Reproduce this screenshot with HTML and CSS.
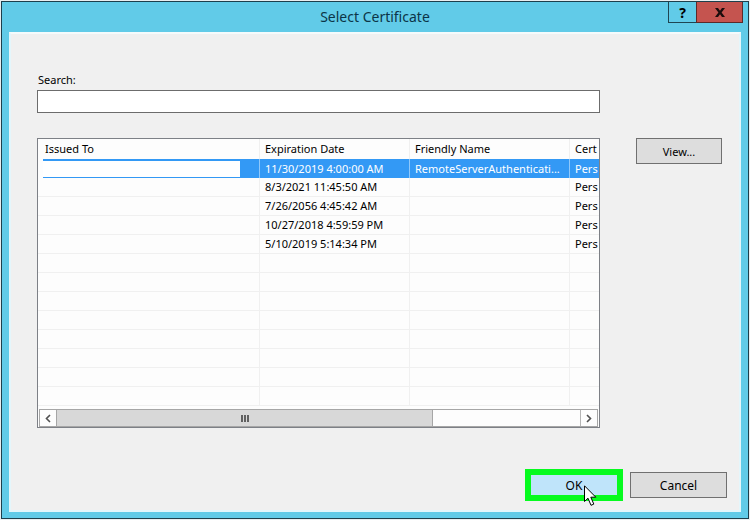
FILE: index.html
```html
<!DOCTYPE html>
<html lang="en">
<head>
  <meta charset="UTF-8" />
  <meta name="viewport" content="width=device-width, initial-scale=1.0" />
  <title>Select Certificate</title>
  <link rel="stylesheet" href="styles.css">
</head>
<body>
  <div class="dialog" role="dialog" aria-labelledby="dialogTitle">
    <div class="titlebar">
      <h1 id="dialogTitle">Select Certificate</h1>
      <div class="window-buttons">
        <button class="help" aria-label="Help">?</button>
        <button class="close" aria-label="Close">
          <svg width="10" height="9" viewBox="0 0 10 9"><path d="M0 0 H3 L5 2.7 L7 0 H10 L6.6 4.5 L10 9 H7 L5 6.3 L3 9 H0 L3.4 4.5 Z" fill="#1c0d0d" /></svg>
        </button>
      </div>
    </div>

    <div class="content">
      <div class="search">
        <label for="search">Search:</label>
        <input type="text" id="search">
      </div>

      <div class="main">
        <div class="list">
          <table>
            <colgroup>
              <col class="col-issued"><col class="col-date"><col class="col-name"><col>
            </colgroup>
            <thead>
              <tr><th>Issued To</th><th>Expiration Date</th><th>Friendly Name</th><th>Cert</th></tr>
            </thead>
            <tbody>
              <tr class="selected"><td><div class="blank"></div></td><td>11/30/2019 4:00:00 AM</td><td>RemoteServerAuthenticati...</td><td>Pers</td></tr>
              <tr><td></td><td>8/3/2021 11:45:50 AM</td><td></td><td>Pers</td></tr>
              <tr><td></td><td>7/26/2056 4:45:42 AM</td><td></td><td>Pers</td></tr>
              <tr><td></td><td>10/27/2018 4:59:59 PM</td><td></td><td>Pers</td></tr>
              <tr><td></td><td>5/10/2019 5:14:34 PM</td><td></td><td>Pers</td></tr>
              <tr><td></td><td></td><td></td><td></td></tr>
              <tr><td></td><td></td><td></td><td></td></tr>
              <tr><td></td><td></td><td></td><td></td></tr>
              <tr><td></td><td></td><td></td><td></td></tr>
              <tr><td></td><td></td><td></td><td></td></tr>
              <tr><td></td><td></td><td></td><td></td></tr>
              <tr><td></td><td></td><td></td><td></td></tr>
              <tr><td></td><td></td><td></td><td></td></tr>
            </tbody>
          </table>
          <div class="scrollbar">
            <button aria-label="Scroll left">
              <svg width="6" height="9" viewBox="0 0 6 9"><path d="M5 1 L1.5 4.5 L5 8" stroke="#505050" stroke-width="1.6" fill="none" /></svg>
            </button>
            <div class="track">
              <div class="thumb"><i></i><i></i><i></i></div>
            </div>
            <button aria-label="Scroll right">
              <svg width="6" height="9" viewBox="0 0 6 9"><path d="M1 1 L4.5 4.5 L1 8" stroke="#505050" stroke-width="1.6" fill="none" /></svg>
            </button>
          </div>
        </div>
        <button class="btn view">View...</button>
      </div>

      <div class="footer">
        <button class="btn ok">OK
          <svg class="cursor" width="13" height="21" viewBox="0 0 13 21"><path d="M0.5 0.8 V16.5 L4 13.2 L7 20.3 L9.8 19.1 L6.8 12.2 H11.8 Z" fill="#fff" stroke="#000" stroke-width="1" /></svg>
        </button>
        <button class="btn">Cancel</button>
      </div>
    </div>
  </div>
</body>
</html>
```
FILE: styles.css
```css
* {
  box-sizing: border-box;
}

body {
  margin: 0;
  padding: 1px;
  min-height: 100vh;
  display: flex;
  background: #e9eef0;
  color: #000;
  font-family: "Noto Sans", "Segoe UI", sans-serif;
  font-size: 11px;
}

button, input {
  font: inherit;
  color: inherit;
  margin: 0;
  padding: 0;
}

.dialog {
  flex: 1;
  display: flex;
  flex-direction: column;
  border: 1px solid #1d3f4c;
  background: #61cbe8;
  padding: 0 7px 6px;
}

/* title bar */

.titlebar {
  display: flex;
  position: relative;
  justify-content: center;
  height: 30px;
}

h1 {
  margin: 0;
  font-size: 14px;
  font-weight: normal;
  line-height: 30px;
  color: #0c3547;
}

.window-buttons {
  position: absolute;
  top: 0;
  right: -2px;
  display: flex;
}

.window-buttons button {
  display: flex;
  align-items: center;
  justify-content: center;
  height: 21px;
  border: 1px solid #1f4552;
  border-top: 0;
  background: #61cbe8;
}

.window-buttons .help {
  width: 28px;
  border-right: 0;
  font-size: 14px;
  font-weight: bold;
}

.window-buttons .close {
  width: 47px;
  border-color: #5b2a2a;
  background: #c5544f;
}

.content {
  flex: 1;
  display: flex;
  flex-direction: column;
  border: 2px solid #e4f6fb;
  border-top-color: #f5fbfc;
  background: #f0f0f0;
  padding: 36px 12px 9px 26px;
}

/* search */

.search {
  display: flex;
  flex-direction: column;
  margin-right: 127px;
}

.search label {
  line-height: 20px;
  padding-left: 1px;
}

.search input {
  height: 23px;
  border: 1px solid #6c6c6c;
  background: #fff;
  padding: 0 4px;
}

/* certificate list */

.main {
  display: flex;
  align-items: flex-start;
  gap: 36px;
  margin: 25px 5px 0 0;
}

.list {
  flex: 1;
  min-width: 0;
  border: 1px solid #7d8086;
  background: #fdfdfd;
}

table {
  width: 100%;
  table-layout: fixed;
  border-collapse: separate;
  border-spacing: 0;
}

.col-issued { width: 222px; }
.col-date { width: 150px; }
.col-name { width: 160px; }

th, td {
  height: 19px;
  padding: 0 0 0 5px;
  border-right: 1px solid #f0f0f0;
  border-bottom: 1px solid #f0f0f0;
  line-height: 18px;
  font-weight: normal;
  text-align: left;
  white-space: nowrap;
  overflow: hidden;
}

th {
  height: 20px;
  line-height: 20px;
  border-bottom: 0;
}

th:first-child {
  padding-left: 7px;
}

th:last-child, td:last-child {
  border-right: 0;
}

.selected td {
  background: #3399f5;
  border-right-color: #8fc8fb;
  border-bottom: 0;
  color: #fff;
}

.selected td:first-child {
  border-left: 5px solid #fdfdfd;
  padding: 0;
}

.blank {
  width: 197px;
  height: 16px;
  background: #fff;
}

.scrollbar {
  display: flex;
  height: 18px;
  margin: 3px 1px 0;
  border: 1px solid #a6a6a6;
}

.scrollbar button {
  display: flex;
  align-items: center;
  justify-content: center;
  width: 16px;
  border: 0;
  background: #fdfdfd;
}

.track {
  flex: 1;
  border-right: 1px solid #b5b5b5;
}

.thumb {
  display: flex;
  align-items: center;
  justify-content: center;
  gap: 1px;
  width: 72%;
  height: 16px;
  border: 1px solid #a6a6a6;
  border-width: 0 1px;
  background: #d8d8d8;
}

.thumb i {
  width: 2px;
  height: 7px;
  background: #606060;
}

/* buttons */

.btn {
  width: 97px;
  height: 26px;
  border: 1px solid #707070;
  background: #dddddd;
}

.view {
  width: 86px;
}

.footer {
  display: flex;
  justify-content: flex-end;
  align-items: center;
  gap: 7px;
  margin-top: auto;
  font-size: 12px;
}

.ok {
  position: relative;
  width: 98px;
  height: 32px;
  border: 6px solid #06fb1f;
  background: #bfe4fa;
}

.cursor {
  position: absolute;
  left: 53px;
  top: 10px;
}
```
